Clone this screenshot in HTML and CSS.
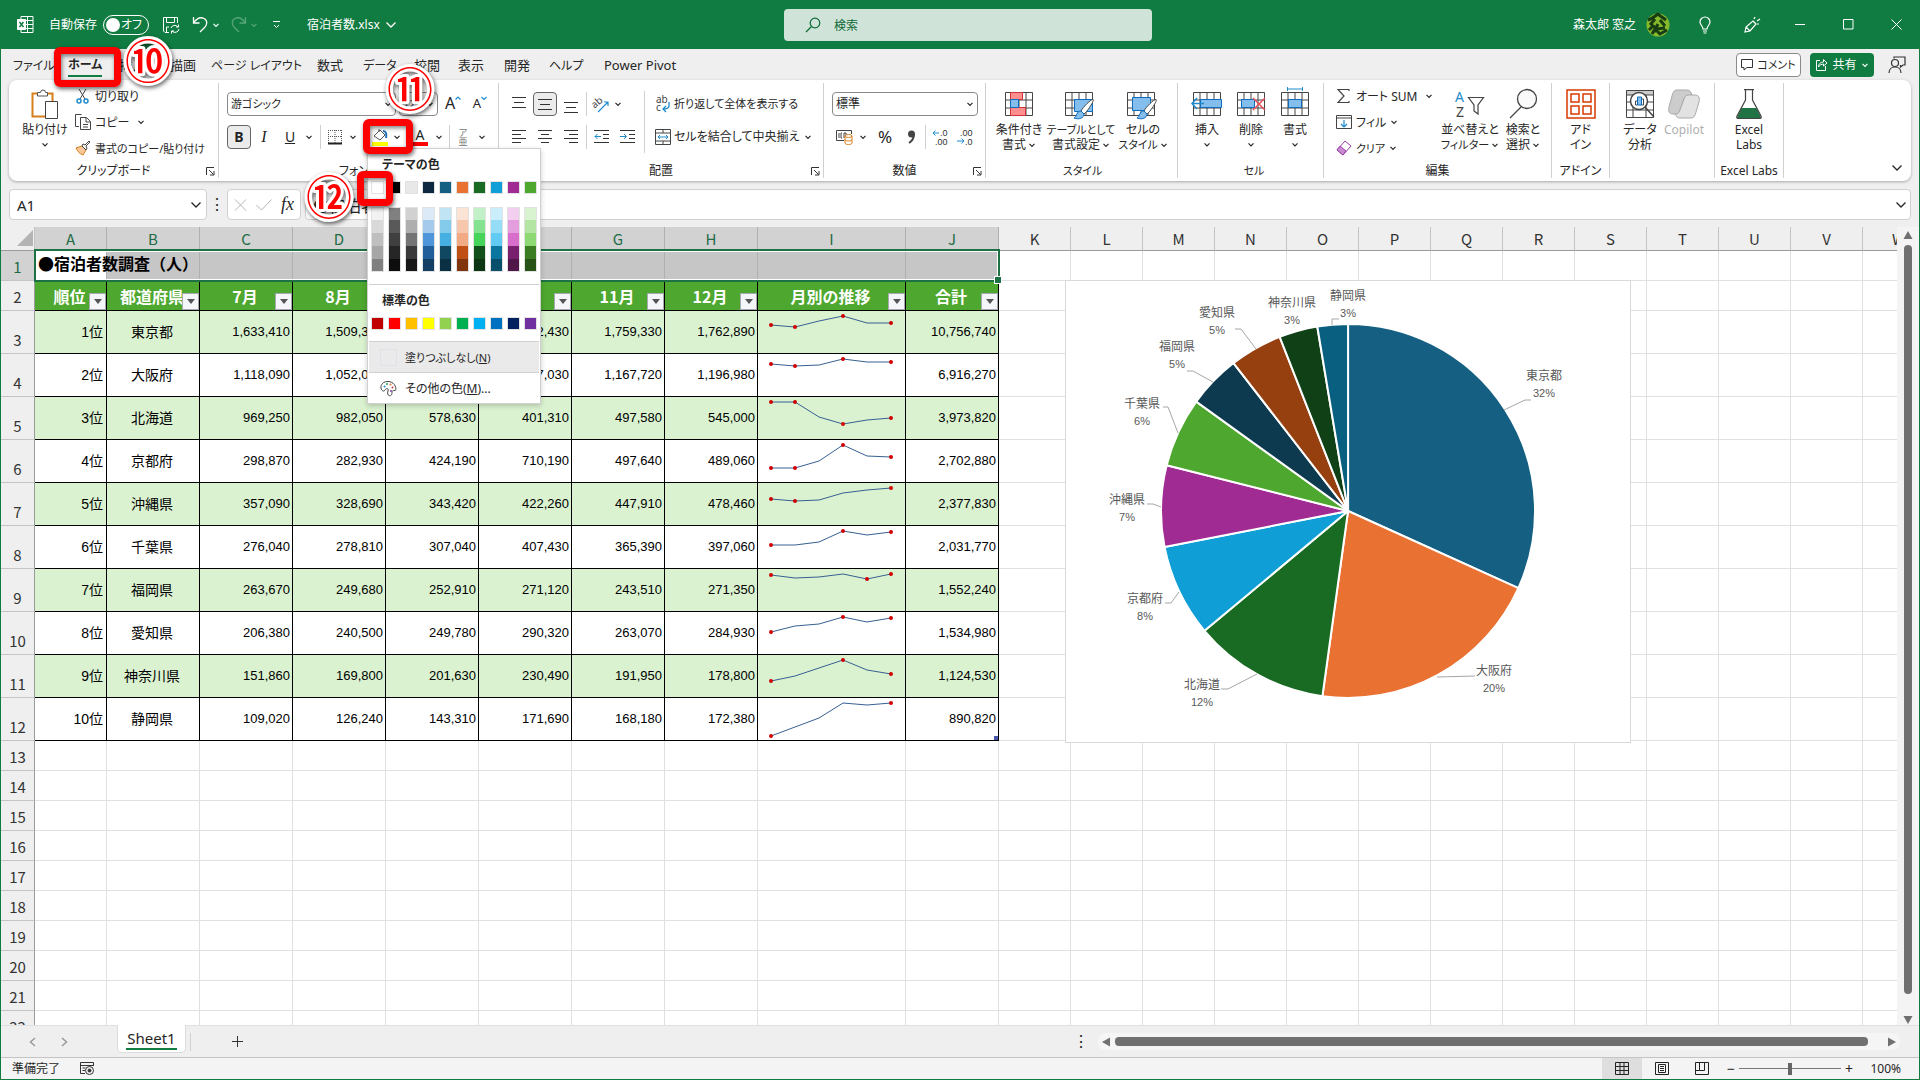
FILE: index.html
```html
<!DOCTYPE html>
<html lang="ja">
<head>
<meta charset="utf-8">
<title>宿泊者数.xlsx - Excel</title>
<link rel="stylesheet" href="styles.css">
</head>
<body>
<svg class="defs" aria-hidden="true">
  <symbol id="chev" viewBox="0 0 8 8"><path d="M1.5 2.8 4 5.3 6.5 2.8" fill="none" stroke="currentColor" stroke-width="1.2"/></symbol>
  <symbol id="chevl" viewBox="0 0 12 12"><path d="M1.5 3.5 6 8l4.500-4.500" fill="none" stroke="currentColor" stroke-width="1.300"/></symbol>
  <symbol id="launch" viewBox="0 0 9 9"><path d="M.5 8V.5H8M3 3l4.500 4.500M8 4v4H4" fill="none" stroke="#333"/></symbol>
  <symbol id="grid3" viewBox="0 0 28 24"><path d="M.5.5h27v23H.5zM7 .5v23M14 .5v23M21 .5v23M.5 8h27M.5 16h27" fill="#fff" stroke="#444"/></symbol>
  <symbol id="brush" viewBox="0 0 22 22"><path d="M20 1.500C22 2 14 14 11 16l-3-3C10 9 18 1 20 1.500z" fill="#fff" stroke="#444"/><path d="M8 13l3 3c0 4-5 6-10 4 3-1 2-7 7-7z" fill="#83beec" stroke="#0f6cbd"/></symbol>
</svg>
<div class="app">
  <header class="titlebar">
    <svg class="xl" width="17" height="17" viewBox="0 0 17 17" fill="none" stroke="#fff"><path d="M4 3.500v-3h12v16H4v-3M10.500.5v16M9 4.500h7M9 8.500h7M9 12.500h7"/><path d="M.5 3.500h8v10h-8z" fill="#fff"/><path d="m2.500 6 4 5m0-5-4 5" stroke="#107c41" stroke-width="1.400"/></svg>
    <span class="autosave">自動保存</span>
    <button class="toggle"><i></i>オフ</button>
    <button class="tb save" aria-label="上書き保存"><svg width="18" height="18" viewBox="0 0 18 18" fill="none" stroke="#fff"><path d="M7 16.500H3L1.500 15V1.500h14V7M4.500 1.500v5h8v-5M4.500 16v-5H7"/><path d="M9 12a4 4 0 0 1 7-1m.5-2.500V11H14M17 13a4 4 0 0 1-7 2m-.5 2.500V15H12"/></svg></button>
    <button class="tb undo" aria-label="元に戻す"><svg width="17" height="17" viewBox="0 0 17 17" fill="none" stroke="#fff" stroke-width="1.300"><path d="M1.500 1v6h6M1.500 7C5 2 9 1 12 2.500c4 2 3 6 1 8.500l-5 5"/></svg></button>
    <svg class="c8" width="8" height="8"><use href="#chev"/></svg>
    <button class="tb redo" aria-label="やり直し"><svg width="17" height="17" viewBox="0 0 17 17" fill="none" stroke="#58a57a" stroke-width="1.300"><path d="M15.500 1v6h-6M15.500 7C12 2 8 1 5 2.500 1 4.500 2 8.500 4 11l5 5"/></svg></button>
    <svg class="c8 dim" width="8" height="8"><use href="#chev"/></svg>
    <button class="tb custom" aria-label="クイック アクセス ツール バーのユーザー設定"><svg width="9" height="10" viewBox="0 0 9 10" fill="none" stroke="#fff"><path d="M1 1.500h7M2 5l2.500 2.500L7 5"/></svg></button>
    <button class="fname">宿泊者数.xlsx <svg width="12" height="12"><use href="#chevl"/></svg></button>
    <label class="search"><svg width="16" height="16" viewBox="0 0 16 16" fill="none" stroke="#0e6a37" stroke-width="1.200"><circle cx="10" cy="6" r="4.800"/><path d="M6.500 9.500 1 15"/></svg><input type="text" placeholder="検索" aria-label="検索"></label>
    <div class="account">
      <span>森太郎 窓之</span>
      <svg width="24" height="24" viewBox="0 0 24 24"><circle cx="12" cy="12" r="11.500" fill="#86b92c"/><path d="M2 7c7-2 10-8 11-5l7 5M4 12l5-6m5 1 5 6M3 17l4-4 4 3 8-1M6 21l3-5 5 5 7-4M12 11l-4 8" fill="none" stroke="#193d12" stroke-width="3"/></svg>
      <button class="tb" aria-label="ヒント"><svg width="14" height="18" viewBox="0 0 14 18" fill="none" stroke="#fff" stroke-width="1.200"><path d="M5 13c0-3-3-4-3-7a5 5 0 0 1 10 0c0 3-3 4-3 7zM5 15h4M5.500 17h3"/></svg></button>
      <button class="tb" aria-label="ペン"><svg width="18" height="18" viewBox="0 0 18 18" fill="none" stroke="#fff" stroke-width="1.200"><path d="m2 16 1-5 7-6 3 3-6 7zM3 11l4 4M11 3l1-2M14 5l3-2M14 8l2 0M10 5l3 3"/></svg></button>
      <button class="tb" aria-label="最小化"><svg width="11" height="11" stroke="#fff"><path d="M0 5.500h10"/></svg></button>
      <button class="tb" aria-label="最大化"><svg width="11" height="11" stroke="#fff" fill="none"><path d="M.5.5h9.500v9.500H.5z"/></svg></button>
      <button class="tb" aria-label="閉じる"><svg width="11" height="11" stroke="#fff"><path d="m.5.5 10 10m0-10-10 10"/></svg></button>
    </div>
  </header>

  <nav class="tabs">
    <a href="#" class="k">ファイル</a><a href="#" class="k on">ホーム</a><a href="#">挿入</a><a href="#">描画</a><a href="#" class="k">ページ レイアウト</a><a href="#">数式</a><a href="#" class="k">データ</a><a href="#">校閲</a><a href="#">表示</a><a href="#">開発</a><a href="#" class="k">ヘルプ</a><a href="#">Power Pivot</a>
    <div class="tabs-end">
      <button class="comment"><svg width="13" height="12" fill="none" stroke="#333"><path d="M.5.5h11v8H6l-3 2.500V8.500H.5z"/></svg>コメント</button>
      <button class="share"><svg width="13" height="13" fill="none" stroke="#fff"><path d="M5 2.500H1.500v10h9V8M3.500 9c0-4 3-5 5-5V1.500L12 5 8.500 8V6c-2 0-4 1-5 3z"/></svg>共有<svg width="8" height="8"><use href="#chev"/></svg></button>
      <button class="plain" aria-label="プレゼンス"><svg width="18" height="18" fill="none" stroke="#333" stroke-width="1.200"><path d="M6 2.500V1h11v8h-2l-2.500 2V9"/><circle cx="7" cy="7" r="3.500"/><path d="M1 17c0-8 12-8 12 0"/></svg></button>
    </div>
  </nav>

  <section class="ribbon">
    <div class="group g-clip">
      <div class="body">
        <button class="big paste"><svg width="28" height="30" viewBox="0 0 28 30" fill="none"><path d="M6 4.500H1.500v23H14M16 4.500h5.500V12" stroke="#d67f1c" stroke-width="2"/><path d="M6.500 7V3.500h3a2.500 2.500 0 0 1 5 0h2V7z" fill="#fff" stroke="#555"/><path d="M14.500 12.500h12v17h-12z" fill="#fff" stroke="#444"/></svg><span>貼り付け</span><svg width="8" height="15" viewBox="0 0 8 8"><use href="#chev"/></svg></button>
        <div class="stack">
          <button><svg width="16" height="16" fill="none"><path d="m4 1 6 10M11 1 5 11" stroke="#444"/><circle cx="4" cy="13" r="2" stroke="#1e8bcd" stroke-width="1.500"/><circle cx="11" cy="13" r="2" stroke="#1e8bcd" stroke-width="1.500"/></svg>切り取り</button>
          <button><svg width="16" height="16" fill="none" stroke="#444"><path d="M4 12.500H.5v-12h6M5.500 3.500h6l4 4v8h-10zM11 4v4h4M8 10.500h5M8 13h5"/></svg>コピー<svg class="gap" width="8" height="8"><use href="#chev"/></svg></button>
          <button><svg width="16" height="16"><path d="m1 8 6-2 4 4-3 5c-3-1-5-3-7-7z" fill="#f8c89a" stroke="#d67f1c"/><path d="m7 6 1-2 2 1 4-4 1 1-4 4 1 2-1 2z" fill="#fff" stroke="#444"/></svg>書式のコピー/貼り付け</button>
        </div>
      </div>
      <footer>クリップボード<button aria-label="クリップボード"><svg width="9" height="9"><use href="#launch"/></svg></button></footer>
    </div>

    <div class="group g-font">
      <div class="body rows">
        <div class="row r-font1">
          <span class="combo"><select aria-label="フォント"><option>游ゴシック</option></select><svg width="8" height="8"><use href="#chev"/></svg></span>
          <span class="combo"><select aria-label="フォント サイズ"><option>12</option></select><svg width="8" height="8"><use href="#chev"/></svg></span>
          <button class="grow" aria-label="フォント サイズの拡大"><span>A</span><svg width="6" height="5" fill="none" stroke="#1e8bcd" stroke-width="1.200"><path d="M.5 3.500 3 1l2.500 2.500"/></svg></button>
          <button class="shrink" aria-label="フォント サイズの縮小"><span>A</span><svg width="6" height="5" fill="none" stroke="#1e8bcd" stroke-width="1.200"><path d="M.5 1 3 3.500 5.500 1"/></svg></button>
        </div>
        <div class="row r-font2">
          <button class="active"><b>B</b></button><button><i>I</i></button><button><u>U</u></button><svg width="8" height="8"><use href="#chev"/></svg><hr>
          <button aria-label="罫線"><svg width="16" height="16" fill="none" stroke="#555"><path d="M1.500 1v13M14.500 1v13M8 1v13M1 1.500h14M1 7.500h14" stroke-dasharray="1 1"/><path d="M1 14.500h14" stroke="#222" stroke-width="2"/></svg></button><svg width="8" height="8"><use href="#chev"/></svg>
          <button class="end" aria-label="塗りつぶしの色"><svg width="16" height="18" fill="none"><path d="M2 8 8 2l5 5-5 5zM7 4V1" stroke="#555"/><path d="M11 3c3 0 4 3 3 7" stroke="#1e6fb8" stroke-width="2"/><path d="M0 14h16v4H0z" fill="#ff0"/></svg></button><svg width="8" height="8"><use href="#chev"/></svg>
          <button class="fontcolor"><span>A</span></button><svg width="8" height="8"><use href="#chev"/></svg><hr>
          <button class="ruby"><span>ア</span><span>亜</span></button><svg width="8" height="8"><use href="#chev"/></svg>
        </div>
      </div>
      <footer>フォント</footer>
    </div>

    <div class="group g-align">
      <div class="body">
        <div class="rows">
          <div class="row r-al">
            <button aria-label="上揃え"><svg width="14" height="16" stroke="#333"><path d="M0 1.500h14M2 6.500h10M0 11.500h14"/></svg></button>
            <button class="active" aria-label="上下中央揃え"><svg width="14" height="16" stroke="#333"><path d="M0 3.500h14M2 8.500h10M0 13.500h14"/></svg></button>
            <button aria-label="下揃え"><svg width="14" height="20" stroke="#333"><path d="M0 8.500h14M2 13.500h10M0 18.500h14"/></svg></button><hr>
            <button aria-label="方向"><svg width="18" height="18" fill="none"><text x="0" y="11" font-size="10" fill="#444" transform="rotate(-40 5 9)">ab</text><path d="m6 17 10-10m-4 0h4v4" stroke="#1e8bcd" stroke-width="1.200"/></svg></button><svg class="near" width="8" height="8"><use href="#chev"/></svg>
          </div>
          <div class="row r-al">
            <button aria-label="左揃え"><svg width="14" height="14" stroke="#333"><path d="M0 .5h14M0 4.500h9M0 8.500h14M0 12.500h9"/></svg></button>
            <button aria-label="中央揃え"><svg width="14" height="14" stroke="#333"><path d="M0 .5h14M3 4.500h8M0 8.500h14M3 12.500h8"/></svg></button>
            <button aria-label="右揃え"><svg width="14" height="14" stroke="#333"><path d="M0 .5h14M5 4.500h9M0 8.500h14M5 12.500h9"/></svg></button><hr>
            <button aria-label="インデントを減らす"><svg width="15" height="14" stroke="#333" fill="none"><path d="M0 .5h15M9 4.500h6M9 8.500h6M0 12.500h15"/><path d="M7 6.500H1M3.500 4 1 6.500 3.500 9" stroke="#1e8bcd"/></svg></button>
            <button aria-label="インデントを増やす"><svg width="15" height="14" stroke="#333" fill="none"><path d="M0 .5h15M9 4.500h6M9 8.500h6M0 12.500h15"/><path d="M0 6.500h6M4 4l2.500 2.500L4 9" stroke="#1e8bcd"/></svg></button>
          </div>
        </div>
        <hr class="tall">
        <div class="rows wraps">
          <button class="row tight"><svg width="16" height="18" fill="none"><text x="1" y="8" font-size="10" fill="#444">ab</text><text x="1" y="16" font-size="10" fill="#444">c</text><path d="M14 7v4c0 2-2 3-6 3m3-3-3 3 3 3" stroke="#1e8bcd" stroke-width="1.300"/></svg>折り返して全体を表示する</button>
          <button class="row tight"><svg width="16" height="16" fill="none" stroke="#444"><path d="M.5.5h15v15H.5zM.5 4h15M.5 12h15M8 .5V4M8 12v3.500"/><path d="M3 8h10M5 6 3 8l2 2M11 6l2 2-2 2" stroke="#1e8bcd"/></svg>セルを結合して中央揃え<svg class="gap" width="8" height="8"><use href="#chev"/></svg></button>
        </div>
      </div>
      <footer>配置<button aria-label="配置"><svg width="9" height="9"><use href="#launch"/></svg></button></footer>
    </div>

    <div class="group g-num">
      <div class="body rows">
        <div class="row r-num1"><span class="combo"><select aria-label="数値の書式"><option>標準</option></select><svg width="8" height="8"><use href="#chev"/></svg></span></div>
        <div class="row r-num2">
          <button aria-label="通貨"><svg width="17" height="17" fill="none" stroke="#444"><path d="M8 12.500H.5v-10h15V6M3 5v5M6 5H5v5h1M8 10V5h2v3"/><ellipse cx="12.500" cy="8" rx="3.500" ry="1.500" fill="#fff" stroke="#d67f1c"/><path d="M9 8v7c0 2 7 2 7 0V8M9 11.500c0 2 7 2 7 0" stroke="#d67f1c"/></svg></button><svg width="8" height="8"><use href="#chev"/></svg>
          <button class="pct">%</button><button aria-label="桁区切り"><svg width="9" height="14"><circle cx="4.500" cy="4" r="3.500" fill="#444"/><path d="M7 4c0 5-2 7-5 9" fill="none" stroke="#444" stroke-width="2"/></svg></button><hr>
          <button aria-label="小数点以下の表示桁数を増やす"><svg width="17" height="18"><text x="8" y="8" class="dec">.0</text><text x="3" y="17" class="dec">.00</text><path d="M7 5H1m2.500-2.500L1 5l2.500 2.500" stroke="#1e8bcd" fill="none"/></svg></button>
          <button aria-label="小数点以下の表示桁数を減らす"><svg width="17" height="18"><text x="3" y="8" class="dec">.00</text><text x="8" y="17" class="dec">.0</text><path d="M0 13h7M4.500 10.500 7 13l-2.500 2.500" stroke="#1e8bcd" fill="none"/></svg></button>
        </div>
      </div>
      <footer>数値<button aria-label="数値"><svg width="9" height="9"><use href="#launch"/></svg></button></footer>
    </div>

    <div class="group g-style">
      <div class="body">
        <button class="big"><svg width="28" height="30"><use href="#grid3" y="3" width="28" height="24"/><path d="M5.500 3.500h12v7h-12zM5.500 18.500h15v8h-15z" fill="#ff8f8f" stroke="#d13438"/><path d="M5.500 10.500h8v8h-8z" fill="#83beec" stroke="#0f6cbd"/></svg><span>条件付き</span><span>書式<svg width="8" height="8"><use href="#chev"/></svg></span></button>
        <button class="big"><svg width="32" height="30"><use href="#grid3" y="3" width="28" height="24"/><path d="M9.500 10.500h18v12h-18z" fill="#83beec" stroke="#0f6cbd"/><use href="#brush" x="8" y="9" width="22" height="22"/></svg><span class="tight">テーブルとして</span><span>書式設定<svg width="8" height="8"><use href="#chev"/></svg></span></button>
        <button class="big"><svg width="32" height="30"><use href="#grid3" y="3" width="28" height="24"/><path d="M5.500 8.500h18v13h-18z" fill="#83beec" stroke="#0f6cbd"/><use href="#brush" x="9" y="9" width="22" height="22"/></svg><span>セルの</span><span class="tight">スタイル<svg width="8" height="8"><use href="#chev"/></svg></span></button>
      </div>
      <footer class="tight">スタイル</footer>
    </div>

    <div class="group g-cells">
      <div class="body">
        <button class="big"><svg width="32" height="30"><use href="#grid3" x="2" y="3" width="28" height="24"/><path d="M9.500 10.500h21v8h-21z" fill="#83beec" stroke="#0f6cbd"/><path d="M13 14.500H1M6 9l-5 5.500L6 20" fill="none" stroke="#1e8bcd" stroke-width="1.500"/></svg><span>挿入</span><svg width="8" height="15" viewBox="0 0 8 8"><use href="#chev"/></svg></button>
        <button class="big"><svg width="32" height="30"><use href="#grid3" x="2" y="3" width="28" height="24"/><path d="M6.500 10.500h13v8h-13z" fill="#83beec" stroke="#0f6cbd"/><path d="m18 9 12 12m0-12L18 21" fill="none" stroke="#e8505b" stroke-width="1.500"/></svg><span>削除</span><svg width="8" height="15" viewBox="0 0 8 8"><use href="#chev"/></svg></button>
        <button class="big"><svg width="32" height="30"><use href="#grid3" x="2" y="3" width="28" height="24"/><path d="M9.500 10.500h13v8h-13z" fill="#83beec" stroke="#0f6cbd"/><path d="M8.500-2v4M23.500-2v4M8 0h16" fill="none" stroke="#1e8bcd"/></svg><span>書式</span><svg width="8" height="15" viewBox="0 0 8 8"><use href="#chev"/></svg></button>
      </div>
      <footer class="tight">セル</footer>
    </div>

    <div class="group g-edit">
      <div class="body">
        <div class="stack">
          <button><svg width="16" height="16" fill="none" stroke="#444" stroke-width="1.200"><path d="M13 3V1.500H2L8 8l-6 6.500h11V13"/></svg>オート SUM<svg class="gap" width="8" height="8"><use href="#chev"/></svg></button>
          <button><svg width="16" height="16" fill="none" stroke="#444"><path d="M.5 1.500h15v13H.5zM.5 4h15"/><path d="M8 6v7M5 10l3 3 3-3" stroke="#1e8bcd" stroke-width="1.200"/></svg>フィル<svg width="8" height="8"><use href="#chev"/></svg></button>
          <button><svg width="16" height="16"><path d="m1 10 8-9 6 5-8 9z" fill="#fff" stroke="#9b3fa8"/><path d="m1 10 3-4 6 5-3 4z" fill="#c98ad2" stroke="#9b3fa8"/></svg>クリア<svg width="8" height="8"><use href="#chev"/></svg></button>
        </div>
        <button class="big w56"><svg width="30" height="30" fill="none"><text x="0" y="13" font-size="14" fill="#1e8bcd">A</text><text x="1" y="28" font-size="14" fill="#444">Z</text><path d="M13.500 8.500h15L23 16v9l-4-3v-6z" stroke="#444" stroke-width="1.200"/></svg><span>並べ替えと</span><span class="tight">フィルター<svg width="8" height="8"><use href="#chev"/></svg></span></button>
        <button class="big w50"><svg width="30" height="30" fill="none" stroke="#444" stroke-width="1.300"><circle cx="19" cy="10" r="9.500" fill="#fafafa"/><path d="M13 18 2 29"/></svg><span>検索と</span><span>選択<svg width="8" height="8"><use href="#chev"/></svg></span></button>
      </div>
      <footer>編集</footer>
    </div>

    <div class="group g-addin">
      <div class="body"><button class="big"><svg width="30" height="30" fill="none" stroke="#d83b01" stroke-width="1.500"><path d="M1 1h28v28H1zM5 5h8v8H5zM17 5h8v8h-8zM5 17h8v8H5zM17 17h8v8h-8z"/></svg><span>アド</span><span>イン</span></button></div>
      <footer>アドイン</footer>
    </div>

    <div class="group g-data">
      <div class="body">
        <button class="big"><svg width="30" height="30" fill="none" stroke="#444"><path d="M1.500 1.500h27v27h-27z"/><path d="M1.500 1.500h27V6h-27z" fill="#ccc"/><path d="M1.500 13h27M1.500 21h27M8 6v22M21 6v22"/><circle cx="14" cy="12" r="8.500" fill="#fff" stroke-width="1.500"/><path d="m20 18 9 10" stroke-width="1.500"/><path d="M10.500 12v4h2v-4zM16.500 10v6h2v-6z"/><path d="M12.500 8h4v8h-4z" fill="#83beec" stroke="#0f6cbd"/></svg><span>データ</span><span>分析</span></button>
        <button class="big off" disabled><svg width="34" height="30"><path d="M10 1h10c3 0 4 2 5 5l-4 1c-3 0-4 2-5 5l-3 9c-1 3-2 4-5 4H6c-4 0-5-3-4-7l3-11c1-4 2-6 5-6z" fill="#ccc" stroke="#aaa"/><path d="M24 29H13c-3 0-4-2-5-4 3 0 4-1 5-4l4-11c1-3 2-4 5-4h6c4 0 5 3 4 7l-3 10c-1 4-2 6-5 6z" fill="#e2e2e2" stroke="#aaa"/></svg><span>Copilot</span></button>
      </div>
    </div>

    <div class="group g-labs">
      <div class="body"><button class="big"><svg width="26" height="30" fill="none"><path d="M5.500 19h15l4 8c1 2 0 2.500-1 2.500h-21c-1 0-2-.5-1-2.500z" fill="#217346"/><path d="M8 .7h10M9.500 1v10L1 27c-1 2 .5 2.500 1.500 2.500h21c1 0 2.500-.5 1.500-2.500l-8.500-16V1" stroke="#444" stroke-width="1.200"/></svg><span>Excel</span><span>Labs</span></button></div>
      <footer>Excel Labs</footer>
    </div>
    <button class="collapse" aria-label="リボンを折りたたむ"><svg width="12" height="12"><use href="#chevl"/></svg></button>
  </section>

  <section class="formula">
    <label class="namebox"><input type="text" value="A1" aria-label="名前ボックス"><svg width="12" height="12"><use href="#chevl"/></svg></label>
    <span class="dots">⋮</span>
    <div class="fx">
      <button aria-label="キャンセル"><svg width="13" height="12" fill="none" stroke="#b5b5b5"><path d="m1 .5 11 11m0-11-11 11"/></svg></button>
      <button aria-label="入力"><svg width="16" height="12" fill="none" stroke="#b5b5b5"><path d="m.5 6 5 5 10-10.500"/></svg></button>
      <button class="f">fx</button>
    </div>
    <label class="finput"><input type="text" value="●宿泊者数調査（人）" aria-label="数式バー"><svg width="12" height="12"><use href="#chevl"/></svg></label>
  </section>

  <main class="sheet">
    <div class="viewport">
      <table class="grid">
        <colgroup><col class="c-h"><col class="c-s"><col span="7" class="c-m"><col class="c-l"><col class="c-m"><col span="13" class="c-s"></colgroup>
        <thead><tr><th class="corner"><svg width="18" height="17"><path d="M17 0v16H1z" fill="#b4b4b4"/></svg></th><th class="s">A<th class="s">B<th class="s">C<th class="s">D<th class="s">E<th class="s">F<th class="s">G<th class="s">H<th class="s">I<th class="s">J<th>K<th>L<th>M<th>N<th>O<th>P<th>Q<th>R<th>S<th>T<th>U<th>V<th>W</tr></thead>
        <tbody>
        <tr class="sel"><th class="s">1</th><td class="a1"><span>●宿泊者数調査（人）</span><i class="range"><i></i></i></td><td><td><td><td><td><td><td><td><td><td class="rest" colspan="13"></tr>
        <tr class="head"><th>2</th><td>順位<button></button></td><td>都道府県<button></button></td><td>7月<button></button></td><td>8月<button></button></td><td>9月<button></button></td><td>10月<button></button></td><td>11月<button></button></td><td>12月<button></button></td><td>月別の推移<button></button></td><td>合計<button></button></td><td class="rest" colspan="13"></tr>
        <tr class="d"><th>3</th><td>1位<td>東京都<td>1,633,410<td>1,509,330<td>1,849,350<td>2,242,430<td>1,759,330<td>1,762,890<td><svg><polyline points="13,14 37,16 61,10 85,5 109,12 133,12"/><path d="M13 14h0M37 16h0M85 5h0M133 12h0"/></svg><td>10,756,740<td class="rest" colspan="13"></tr>
        <tr class="d"><th>4</th><td>2位<td>大阪府<td>1,118,090<td>1,052,030<td>1,084,420<td>1,297,030<td>1,167,720<td>1,196,980<td><svg><polyline points="13,10 37,12 61,11 85,5 109,8 133,8"/><path d="M13 10h0M37 12h0M85 5h0M133 8h0"/></svg><td>6,916,270<td class="rest" colspan="13"></tr>
        <tr class="d"><th>5</th><td>3位<td>北海道<td>969,250<td>982,050<td>578,630<td>401,310<td>497,580<td>545,000<td><svg><polyline points="13,5 37,5 61,20 85,27 109,23 133,21"/><path d="M13 5h0M37 5h0M85 27h0M133 21h0"/></svg><td>3,973,820<td class="rest" colspan="13"></tr>
        <tr class="d"><th>6</th><td>4位<td>京都府<td>298,870<td>282,930<td>424,190<td>710,190<td>497,640<td>489,060<td><svg><polyline points="13,28 37,28 61,21 85,5 109,16 133,17"/><path d="M13 28h0M37 28h0M85 5h0M133 17h0"/></svg><td>2,702,880<td class="rest" colspan="13"></tr>
        <tr class="d"><th>7</th><td>5位<td>沖縄県<td>357,090<td>328,690<td>343,420<td>422,260<td>447,910<td>478,460<td><svg><polyline points="13,16 37,18 61,17 85,10 109,7 133,5"/><path d="M13 16h0M37 18h0M133 5h0"/></svg><td>2,377,830<td class="rest" colspan="13"></tr>
        <tr class="d"><th>8</th><td>6位<td>千葉県<td>276,040<td>278,810<td>307,040<td>407,430<td>365,390<td>397,060<td><svg><polyline points="13,19 37,19 61,16 85,5 109,9 133,6"/><path d="M13 19h0M85 5h0M133 6h0"/></svg><td>2,031,770<td class="rest" colspan="13"></tr>
        <tr class="d"><th>9</th><td>7位<td>福岡県<td>263,670<td>249,680<td>252,910<td>271,120<td>243,510<td>271,350<td><svg><polyline points="13,6 37,9 61,8 85,5 109,10 133,5"/><path d="M13 6h0M109 10h0M133 5h0"/></svg><td>1,552,240<td class="rest" colspan="13"></tr>
        <tr class="d"><th>10</th><td>8位<td>愛知県<td>206,380<td>240,500<td>249,780<td>290,320<td>263,070<td>284,930<td><svg><polyline points="13,20 37,14 61,12 85,5 109,10 133,6"/><path d="M13 20h0M85 5h0M133 6h0"/></svg><td>1,534,980<td class="rest" colspan="13"></tr>
        <tr class="d"><th>11</th><td>9位<td>神奈川県<td>151,860<td>169,800<td>201,630<td>230,490<td>191,950<td>178,800<td><svg><polyline points="13,26 37,21 61,13 85,5 109,15 133,19"/><path d="M13 26h0M85 5h0M133 19h0"/></svg><td>1,124,530<td class="rest" colspan="13"></tr>
        <tr class="d"><th>12</th><td>10位<td>静岡県<td>109,020<td>126,240<td>143,310<td>171,690<td>168,180<td>172,380<td><svg><polyline points="13,38 37,29 61,20 85,5 109,7 133,5"/><path d="M13 38h0M133 5h0"/></svg><td class="last">890,820<td class="rest" colspan="13"></tr>
        <tr><th>13</th><td></td><td><td><td><td><td><td><td><td><td><td class="rest" colspan="13"></tr>
        <tr><th>14</th><td></td><td><td><td><td><td><td><td><td><td><td class="rest" colspan="13"></tr>
        <tr><th>15</th><td></td><td><td><td><td><td><td><td><td><td><td class="rest" colspan="13"></tr>
        <tr><th>16</th><td></td><td><td><td><td><td><td><td><td><td><td class="rest" colspan="13"></tr>
        <tr><th>17</th><td></td><td><td><td><td><td><td><td><td><td><td class="rest" colspan="13"></tr>
        <tr><th>18</th><td></td><td><td><td><td><td><td><td><td><td><td class="rest" colspan="13"></tr>
        <tr><th>19</th><td></td><td><td><td><td><td><td><td><td><td><td class="rest" colspan="13"></tr>
        <tr><th>20</th><td></td><td><td><td><td><td><td><td><td><td><td class="rest" colspan="13"></tr>
        <tr><th>21</th><td></td><td><td><td><td><td><td><td><td><td><td class="rest" colspan="13"></tr>
        <tr><th>22</th><td></td><td><td><td><td><td><td><td><td><td><td class="rest" colspan="13"></tr>
        </tbody>
      </table>
      <svg class="chart" viewBox="0 0 566 463" width="566" height="463" role="img" aria-label="都道府県別の割合">
        <rect x=".5" y=".5" width="565" height="462" fill="#fff" stroke="#d9d9d9"/>
        <g stroke="#fff" stroke-width="2" stroke-linejoin="round" transform="translate(-1.500 -1.300) scale(1.0055)">
          <path fill="#156082" d="M283 231V45A186 186 0 0 1 452.400 307.700z"/>
          <path fill="#e97132" d="M283 231 452.400 307.700A186 186 0 0 1 257.500 415.200z"/>
          <path fill="#196b24" d="M283 231 257.500 415.200A186 186 0 0 1 140.200 350.200z"/>
          <path fill="#0f9ed5" d="M283 231 140.200 350.200A186 186 0 0 1 100.500 266.900z"/>
          <path fill="#a02b93" d="M283 231 100.500 266.900A186 186 0 0 1 102.600 185.500z"/>
          <path fill="#4ea72e" d="M283 231 102.600 185.500A186 186 0 0 1 132 122.300z"/>
          <path fill="#0d3a4e" d="M283 231 132 122.300A186 186 0 0 1 169.100 83.900z"/>
          <path fill="#964010" d="M283 231 169.100 83.900A186 186 0 0 1 215 57.900z"/>
          <path fill="#0f4016" d="M283 231 215 57.900A186 186 0 0 1 252.400 47.500z"/>
          <path fill="#095f80" d="M283 231 252.400 47.500A186 186 0 0 1 283 45z"/>
        </g>
        <path fill="none" stroke="#a6a6a6" d="M439 130 460 120H466M372 397 410 396M192 394 163 409H156M114 312 106 323H100M96 227 88 224H82M113 153 103 127H98M148 102 128 91H122M191 69 176 49H170M267 45V39H274"/>
        <g class="lbl">
          <text x="479" y="100">東京都</text><text x="479" y="117">32%</text>
          <text x="429" y="395">大阪府</text><text x="429" y="412">20%</text>
          <text x="137" y="409">北海道</text><text x="137" y="426">12%</text>
          <text x="80" y="323">京都府</text><text x="80" y="340">8%</text>
          <text x="62" y="224">沖縄県</text><text x="62" y="241">7%</text>
          <text x="77" y="128">千葉県</text><text x="77" y="145">6%</text>
          <text x="112" y="71">福岡県</text><text x="112" y="88">5%</text>
          <text x="152" y="37">愛知県</text><text x="152" y="54">5%</text>
          <text x="227" y="27">神奈川県</text><text x="227" y="44">3%</text>
          <text x="283" y="20">静岡県</text><text x="283" y="37">3%</text>
        </g>
      </svg>
    </div>
    <div class="vscroll"><svg width="10" height="8"><path d="M5 0l4.500 8h-9z" fill="#707070"/></svg><i></i><svg width="10" height="8"><path d="M5 8 .5 0h9z" fill="#707070"/></svg></div>
  </main>

  <div class="sheetbar">
    <button class="nav" aria-label="前のシート"><svg width="7" height="10" fill="none" stroke="#999" stroke-width="1.500"><path d="M6 1 1.500 5 6 9"/></svg></button>
    <button class="nav" aria-label="次のシート"><svg width="7" height="10" fill="none" stroke="#999" stroke-width="1.500"><path d="m1 1 4.500 4L1 9"/></svg></button>
    <button class="tab"><span>Sheet1</span></button><hr>
    <button class="add" aria-label="新しいシート"><svg width="11" height="11" stroke="#333"><path d="M5.500 0v11M0 5.500h11"/></svg></button>
    <span class="hdots">⋮</span>
    <div class="hscroll"><svg width="8" height="10"><path d="M0 5 8 .5v9z" fill="#707070"/></svg><i></i><svg width="8" height="10"><path d="M8 5 0 .5v9z" fill="#707070"/></svg></div>
  </div>

  <footer class="status">
    <span>準備完了</span>
    <svg width="15" height="14" fill="none" stroke="#333"><path d="M5 11.500H.5V.5h13V4M.5 3.500h13M2.500 6h3M2.500 8.500H5"/><circle cx="9.500" cy="8.500" r="4"/><circle cx="9.500" cy="8.500" r="1.500" fill="#333"/></svg>
    <div class="views">
      <button class="on" aria-label="標準"><svg width="14" height="14" fill="none" stroke="#222"><path d="M.5.5h13v12H.5zM5 .5v12M9 .5v12M.5 4.500h13M.5 8.500h13"/></svg></button>
      <button aria-label="ページ レイアウト"><svg width="14" height="14" fill="none" stroke="#222"><path d="M.5.5h13v12H.5zM3.500 2.500h7v8h-7zM5 4.500h4M5 6.500h4M5 8.500h4"/></svg></button>
      <button aria-label="改ページ プレビュー"><svg width="14" height="14" fill="none" stroke="#222"><path d="M.5.5h13v12H.5zM4.500.5v8h5v-8M.5 8.500h4"/></svg></button>
    </div>
    <div class="zoom"><button>−</button><input type="range" min="10" max="190" value="100" aria-label="ズーム"><button>+</button></div>
    <span class="pc">100%</span>
  </footer>

  <div class="popup">
    <h3>テーマの色</h3>
    <div class="sw"><button style="background:#fff"></button><button style="background:#000"></button><button style="background:#e8e8e8"></button><button style="background:#0e2841"></button><button style="background:#156082"></button><button style="background:#e97132"></button><button style="background:#196b24"></button><button style="background:#0f9ed5"></button><button style="background:#a02b93"></button><button style="background:#4ea72e"></button></div>
    <div class="sw shades">
      <div><button style="background:#f2f2f2"></button><button style="background:#d9d9d9"></button><button style="background:#bfbfbf"></button><button style="background:#a6a6a6"></button><button style="background:#808080"></button></div>
      <div><button style="background:#808080"></button><button style="background:#595959"></button><button style="background:#404040"></button><button style="background:#262626"></button><button style="background:#0d0d0d"></button></div>
      <div><button style="background:#d1d1d1"></button><button style="background:#aeaeae"></button><button style="background:#747474"></button><button style="background:#3a3a3a"></button><button style="background:#171717"></button></div>
      <div><button style="background:#dceaf7"></button><button style="background:#a6caec"></button><button style="background:#4e95d9"></button><button style="background:#215f9a"></button><button style="background:#153e64"></button></div>
      <div><button style="background:#c1e4f5"></button><button style="background:#83caeb"></button><button style="background:#45b0e1"></button><button style="background:#104862"></button><button style="background:#0c3043"></button></div>
      <div><button style="background:#fbe3d6"></button><button style="background:#f6c6ad"></button><button style="background:#f2aa84"></button><button style="background:#c04f15"></button><button style="background:#80350e"></button></div>
      <div><button style="background:#c2f1c8"></button><button style="background:#84e291"></button><button style="background:#47d45a"></button><button style="background:#12501b"></button><button style="background:#0c3512"></button></div>
      <div><button style="background:#caeefb"></button><button style="background:#95dcf7"></button><button style="background:#61cbf4"></button><button style="background:#0b769f"></button><button style="background:#074f6a"></button></div>
      <div><button style="background:#f2cfee"></button><button style="background:#e59edd"></button><button style="background:#d86ecc"></button><button style="background:#78206e"></button><button style="background:#501549"></button></div>
      <div><button style="background:#d9f2d0"></button><button style="background:#b4e5a2"></button><button style="background:#8ed973"></button><button style="background:#3b7d23"></button><button style="background:#275317"></button></div>
    </div>
    <h3 class="line">標準の色</h3>
    <div class="sw std"><button style="background:#c00000"></button><button style="background:#f00"></button><button style="background:#ffc000"></button><button style="background:#ff0"></button><button style="background:#92d050"></button><button style="background:#00b050"></button><button style="background:#00b0f0"></button><button style="background:#0070c0"></button><button style="background:#002060"></button><button style="background:#7030a0"></button></div>
    <button class="item none tight"><i></i>塗りつぶしなし(<u>N</u>)</button>
    <button class="item"><svg width="17" height="17" fill="none"><path d="M9 15.500c2 1 3-1 3-3s1-2 3-2 1-8-6-9C3 1 .5 5 1 8s3 4 4 2 4-2 3 1 0 4 1 4.500z" stroke="#444"/><circle cx="4.500" cy="6.500" r="1" fill="#1e8bcd"/><circle cx="7" cy="4" r="1" fill="#2aa05a"/><circle cx="10.500" cy="4.500" r="1" fill="#e8702a"/><circle cx="12.500" cy="7.500" r="1" fill="#d13438"/><circle cx="11" cy="11" r="1" fill="#8a3fa8"/></svg>その他の色(<u>M</u>)...</button>
  </div>

  <i class="mark m1"></i><i class="mark m2"></i><i class="mark m3"></i>
  <svg class="num n1" width="60" height="60"><text x="30" y="46">⑩</text></svg>
  <svg class="num n2" width="60" height="60"><text x="30" y="46">⑪</text></svg>
  <svg class="num n3" width="60" height="60"><text x="30" y="46">⑫</text></svg>
</div>
</body>
</html>
```
FILE: styles.css
```css
* { box-sizing: border-box; }
body { margin: 0; font: 12px/15px "Noto Sans", "Noto Sans CJK JP", sans-serif; font-feature-settings: "palt"; color: #262626; background: #efefef; overflow: hidden; }
button, input, select { font: inherit; font-feature-settings: inherit; color: inherit; border: 0; background: none; padding: 0; margin: 0; outline: 0; }
button { display: inline-flex; align-items: center; justify-content: center; white-space: nowrap; }
a { color: inherit; text-decoration: none; }
svg { flex: none; overflow: visible; }
hr { border: 0; border-left: 1px solid #d0d0d0; height: 24px; margin: 0; }
.defs { position: absolute; width: 0; height: 0; }
.tight { font-size: 11px; }

.app { position: relative; display: flex; flex-direction: column; height: 100vh; border: solid #107c41; border-width: 0 1px 1px; }

/* title bar */
.titlebar { position: relative; display: flex; align-items: center; height: 49px; margin: 0 -1px; padding-left: 17px; background: #107c41; color: #fff; flex: none; }
.autosave { margin-left: 15px; width: 54px; }
.toggle { position: relative; width: 46px; height: 20px; border: 1px solid #fff; border-radius: 10px; justify-content: flex-end; padding-right: 6px; }
.toggle i { position: absolute; left: 2px; top: 2px; width: 14px; height: 14px; border-radius: 50%; background: #fff; }
.save { margin-left: 13px; }
.undo { margin-left: 12px; }
.redo { margin-left: 10px; }
.c8 { margin-left: 3px; }
.dim { color: #58a57a; }
.custom { margin-left: 14px; }
.fname { margin-left: 26px; gap: 5px; }
.search { position: absolute; left: calc(50% - 176px); top: 9px; width: 368px; height: 32px; display: flex; align-items: center; gap: 13px; padding-left: 21px; background: #cfe3d8; border-radius: 4px; }
.search input { flex: 1; min-width: 0; }
.search input::placeholder { color: #0e6a37; opacity: 1; }
.account { margin-left: auto; display: flex; align-items: center; }
.account > svg { margin: 0 12px 0 10px; }
.account .tb { width: 48px; }
.account .tb:nth-of-type(1) { width: 46px; }

/* ribbon tabs */
.tabs { display: grid; grid-template-columns: 55px 51px 51px 41px 106px 46px 51px 44px 46px 45px 55px 90px 1fr; align-items: center; height: 31px; padding-left: 12px; font-size: 13px; flex: none; }
.tabs > a { white-space: nowrap; padding-top: 2px; }
.tabs .k { font-size: 12px; }
.tabs .on { font-weight: bold; justify-self: start; border-bottom: 2px solid #107c41; line-height: 20px; }
.tabs-end { display: flex; justify-content: flex-end; gap: 9px; padding-right: 8px; font-size: 12px; }
.comment, .share { height: 24px; border-radius: 4px; gap: 3px; }
.comment { width: 65px; border: 1px solid #8a8a8a; background: #fff; font-size: 11px; }
.share { width: 64px; background: #107c41; color: #fff; gap: 4px; }
.tabs-end .plain { width: 28px; }

/* ribbon */
.ribbon { display: flex; margin: 0 8px; padding: 3px 0; height: 101px; background: #fff; border-radius: 8px; box-shadow: 0 1px 3px rgba(0,0,0,.3); flex: none; }
.group { display: flex; flex-direction: column; border-right: 1px solid #d0d0d0; flex: none; }
.group .body { display: flex; flex: 1; }
.group footer { position: relative; text-align: center; line-height: 14px; height: 14px; white-space: nowrap; }
.group footer button { position: absolute; right: 3px; top: 3px; }
.group .rows { display: flex; flex-direction: column; padding-top: 4px; }
.row { display: grid; align-items: center; justify-items: center; height: 33px; }
.stack { display: flex; flex-direction: column; }
.stack button { height: 26px; justify-content: flex-start; gap: 4px; }
.stack button:last-child { font-size: 11px; }
.stack svg.gap { margin-left: 4px; }
.big { flex-direction: column; justify-content: flex-start; padding-top: 6px; line-height: 15px; }
.big > svg:first-child { margin-bottom: 3px; }
.big span { display: flex; align-items: center; gap: 2px; }
.active { border: 1px solid #666; border-radius: 4px; background: #ebebeb; width: 24px; height: 24px; }
.combo { position: relative; display: flex; align-items: center; justify-self: stretch; height: 24px; border: 1px solid #8a8a8a; border-radius: 4px; }
.combo select { appearance: none; flex: 1; height: 22px; padding-left: 3px; min-width: 0; }
.combo svg { position: absolute; right: 3px; }
.g-clip { width: 210px; }
.paste { width: 52px; margin-left: 10px; }
.g-clip .stack { margin-left: 4px; }
.g-font { width: 280px; }
.g-font .rows { padding-left: 8px; }
.r-font1 { grid-template-columns: 169px 39px 24px 24px; column-gap: 3px; font-size: 11px; }
.r-font2 { grid-template-columns: 24px 26px 26px 12px 11px 18px 18px 26px 18px 28px 10px 10px 18px 20px; font-size: 14px; }
.r-font2 i { font-family: "Liberation Serif", serif; font-size: 16px; }
.r-font2 .end { justify-self: end; }
.grow, .shrink { align-items: flex-start; font-size: 16px; }
.shrink { font-size: 13px; }
.fontcolor { border-bottom: 4px solid #f00; width: 16px; height: 18px; line-height: 14px; }
.ruby { flex-direction: column; font-size: 9px; line-height: 9px; color: #777; }
.g-align { width: 325px; }
.r-al { grid-template-columns: 26px 26px 26px 4px 26px 26px; padding-left: 7px; }
.near { justify-self: start; }
.g-align .rows { width: 145px; }
.tall { height: 62px; margin-top: 8px; }
.g-align .wraps { width: 170px; padding-left: 10px; }
.wraps .row { display: flex; justify-content: flex-start; gap: 3px; }
.wraps .row:last-child { font-size: 12px; }
.wraps .gap { margin-left: 2px; }
.g-num { width: 162px; }
.g-num .rows { padding-left: 8px; }
.r-num1 { grid-template-columns: 146px; }
.r-num2 { grid-template-columns: 24px 14px 30px 22px 6px 24px 26px; }
.dec { font: 9px "Liberation Sans", sans-serif; fill: #333; }
.pct { font-size: 17px; }
.g-style { width: 192px; padding-left: 2px; }
.g-style .big { width: 62px; }
.g-cells { width: 146px; padding-left: 7px; }
.g-cells .big, .g-data .big { width: 44px; }
.g-edit { width: 228px; }
.g-edit .stack { margin-left: 12px; width: 106px; }
.w56 { width: 56px; }
.w50 { width: 50px; }
.g-addin { width: 58px; }
.g-addin .big { width: 58px; }
.g-data { width: 105px; padding-left: 8px; }
.off { color: #b0b0b0; }
.g-labs { width: 69px; }
.g-labs .big { width: 68px; }
.collapse { margin: auto 8px 4px auto; }

/* formula bar */
.formula { display: flex; align-items: stretch; height: 31px; margin: 8px 8px 7px; flex: none; }
.namebox, .fx, .finput { display: flex; align-items: center; background: #fff; border: 1px solid #d0d0d0; border-radius: 4px; }
.namebox { width: 198px; padding: 0 4px 0 7px; font-size: 15px; }
.namebox input, .finput input { flex: 1; min-width: 0; }
.dots { width: 20px; text-align: center; line-height: 31px; font-size: 16px; }
.fx { width: 74px; justify-content: space-between; padding: 0 6px; }
.f { font: italic 18px "Liberation Serif", serif; }
.finput { flex: 1; margin-left: 4px; padding: 0 3px 0 7px; font-size: 16px; font-feature-settings: normal; }

/* sheet */
.sheet { display: flex; flex: 1; min-height: 0; }
.viewport { position: relative; flex: 1; min-width: 0; overflow: hidden; background: #fff; }
.grid { table-layout: fixed; width: 1934px; border-collapse: separate; border-spacing: 0; font: 13px/16px "Liberation Sans", "Noto Sans CJK JP", sans-serif; font-feature-settings: normal; color: #000; }
.c-h { width: 34px; }
.c-s { width: 72px; }
.c-m { width: 93px; }
.c-l { width: 148px; }
.grid th, .grid td { padding: 0; height: 30px; border: solid #e0e0e0; border-width: 0 1px 1px 0; }
.grid th { font: 15px/26px "Noto Sans CJK JP", sans-serif; background: #efefef; color: #333; vertical-align: bottom; border-color: #9b9b9b; border-bottom-color: #c4c4c4; }
.grid thead th { height: 24px; line-height: 20px; vertical-align: middle; border-color: #c4c4c4; border-bottom-color: #9b9b9b; }
.grid th.s { background: #d2d2d2; color: #1e6b45; border-right-color: #b0b0b0; }
.grid .corner { text-align: right; line-height: 0; }
.grid .rest { background: repeating-linear-gradient(90deg, transparent 0 71px, #e0e0e0 71px 72px); }
.sel td { background: #c6c6c6; border-right-color: #b0b0b0; }
.sel .rest { background-color: #fff; }
.grid .a1 { position: relative; background: #fff; white-space: nowrap; font: bold 16px/20px "Noto Sans CJK JP", sans-serif; vertical-align: top; padding-top: 2px; }
.a1 span { position: relative; z-index: 1; padding-left: 3px; }
.range { position: absolute; z-index: 2; left: -1px; top: -2px; width: 966px; height: 33px; border: 2px solid #1e7145; box-shadow: inset 0 0 0 1px #fff; }
.range i { position: absolute; right: -3px; bottom: -3px; width: 6px; height: 6px; background: #1e7145; outline: 1px solid #fff; }
.head td:not(.rest), .d td:not(.rest) { border-color: #000; }
.head td:not(.rest) { position: relative; background: #4ea72e; color: #fff; text-align: center; font: bold 16px/20px "Noto Sans CJK JP", sans-serif; padding-right: 2px; white-space: nowrap; }
.head button { position: absolute; right: 0; bottom: 0; width: 17px; height: 17px; background: #f4f6fa; border: 1px solid #a5a9b0; }
.head button::after { content: ""; border: solid transparent; border-width: 5px 4px 0; border-top-color: #555; }
.d td { text-align: right; height: 43px; padding-right: 2px; }
.d td:nth-child(2) { font-size: 14px; padding-right: 3px; }
.d td:nth-child(3) { font-size: 14px; text-align: center; }
.d td:nth-child(10) { padding: 0; }
.d td:nth-child(10) svg { display: block; width: 147px; height: 42px; fill: none; }
.d:nth-child(odd) td:not(.rest) { background: #daf2d0; }
.d .last { background: linear-gradient(#4a5aa8, #4a5aa8) right bottom / 4px 4px no-repeat; }
.d polyline { stroke: #376092; stroke-width: 1; }
.d path { stroke: #d00000; stroke-width: 4; stroke-linecap: round; }
.chart { position: absolute; left: 1064px; top: 53px; }
.lbl { font: 12px "Liberation Sans", "Noto Sans CJK JP", sans-serif; font-feature-settings: normal; fill: #595959; text-anchor: middle; }
.lbl text:nth-child(even) { font-size: 11px; }

.vscroll { width: 22px; display: flex; flex-direction: column; align-items: center; gap: 6px; padding: 4px 0 1px; background: #f4f4f4; }
.vscroll i { flex: 1; width: 8px; border-radius: 4px; background: #707070; margin-bottom: 16px; }

.sheetbar { display: flex; align-items: center; height: 32px; border-top: 1px solid #e0e0e0; flex: none; }
.nav { width: 32px; }
.nav:first-child { margin-left: 15px; }
.tab { align-self: flex-start; margin: -1px 4px 0 37px; width: 69px; height: 28px; background: #fff; border-radius: 0 0 5px 5px; font-size: 15px; border: 1px solid #dcdcdc; border-top: 0; }
.tab span { border-bottom: 2px solid #107c41; line-height: 20px; padding: 0 1px; }
.sheetbar hr { height: 18px; }
.add { margin-left: 41px; }
.hdots { margin-left: auto; width: 20px; text-align: center; font-size: 16px; }
.hscroll { width: 802px; height: 17px; margin: 0 19px 0 7px; display: flex; align-items: center; background: #f5f5f5; border-radius: 8px; padding: 0 4px; gap: 5px; }
.hscroll i { flex: 1; height: 9px; border-radius: 4px; background: #707070; margin-right: 15px; }

.status { display: flex; align-items: center; height: 22px; padding: 0 18px 0 11px; border-top: 1px solid #c4c4c4; background: #f4f4f4; flex: none; gap: 20px; }
.views { margin-left: auto; display: flex; align-self: stretch; margin-right: -16px; }
.views button { width: 40px; }
.views .on { background: #dedede; }
.zoom { display: flex; align-items: center; gap: 3px; font-size: 14px; margin-right: -7px; }
.zoom button { width: 10px; }
.pc { width: 34px; text-align: right; }
.status input { appearance: none; width: 102px; height: 13px; background: linear-gradient(#777, #777) center / 100% 1px no-repeat; }
.status input::-webkit-slider-thumb { appearance: none; width: 4px; height: 12px; background: #666; }

/* fill colour menu */
.popup { position: absolute; z-index: 10; left: 366px; top: 148px; width: 174px; padding: 0 1px; background: #fff; border: 1px solid #d0d0d0; box-shadow: 0 2px 5px rgba(0,0,0,.2); }
.popup h3 { margin: 0; padding-left: 13px; font-size: 12px; line-height: 32px; }
.popup .line { border-top: 1px solid #d0d0d0; }
.sw { display: flex; gap: 4px; padding-left: 2px; }
.sw button { width: 13px; height: 13px; border: 1px solid #e2e2e2; }
.shades { margin: 13px 0 12px; }
.shades > div { width: 13px; border: 1px solid #e2e2e2; }
.shades button { display: block; width: 11px; border: 0; }
.shades button:first-child, .shades button:last-child { height: 12px; }
.std { margin-bottom: 11px; }
.item { width: 100%; height: 31px; border-top: 1px solid #d0d0d0; justify-content: flex-start; padding-left: 11px; white-space: nowrap; }
.item i, .item svg { width: 17px; height: 17px; margin-right: 8px; }
.none { background: #eaeaea; }
.none i { border: 1px solid #dfe2e8; }

/* step marks */
.mark { position: absolute; z-index: 11; border: 7px solid #f00; border-radius: 6px; box-shadow: 1px 2px 4px rgba(0,0,0,.6), inset 1px 2px 4px rgba(0,0,0,.5); }
.m1 { left: 53px; top: 47px; width: 67px; height: 40px; }
.m2 { left: 362px; top: 119px; width: 50px; height: 35px; }
.m3 { left: 356px; top: 171px; width: 36px; height: 35px; }
.num { position: absolute; z-index: 12; filter: drop-shadow(1px 2px 2px rgba(0,0,0,.6)); }
.num text { font: 500 46px "Noto Sans CJK JP", sans-serif; text-anchor: middle; fill: #f00; stroke: #fff; stroke-width: 6px; stroke-linejoin: round; paint-order: stroke; }
.n1 { left: 117px; top: 32px; }
.n2 { left: 379px; top: 60px; }
.n3 { left: 298px; top: 168px; }
```
